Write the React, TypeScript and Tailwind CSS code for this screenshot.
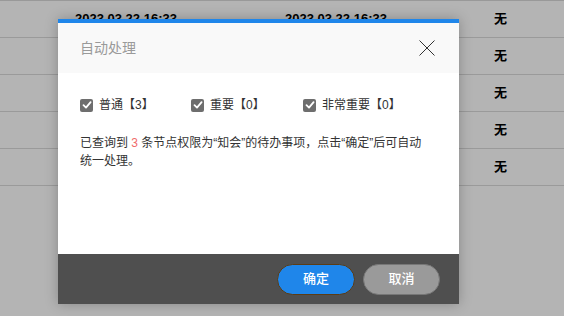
import React from "react";

const rows = [0, 1, 2, 3, 4];

function Check() {
  return (
    <span className="flex h-[13px] w-[13px] items-center justify-center rounded-[2px] bg-[#6e6e6e]">
      <svg width="10" height="10" viewBox="0 0 10 10" fill="none">
        <path d="M1.5 5.2 L4 7.6 L8.6 2.2" stroke="#fff" strokeWidth="1.8" strokeLinecap="round" strokeLinejoin="round" />
      </svg>
    </span>
  );
}

export default function App() {
  return (
    <div
      className="relative h-[316px] w-[564px] overflow-hidden bg-[#b4b4b4]"
      style={{ fontFamily: '"Liberation Sans", "Noto Sans CJK SC", sans-serif' }}
    >
      {/* background table */}
      <div className="border-t border-[#999]">
        {rows.map((r) => (
          <div key={r} className="flex h-[37px] items-center border-b border-[#9a9a9a] text-[13px] font-bold text-black">
            <div className="w-[67px]" />
            <div className="w-[210px] pl-2">2023.03.22 16:33</div>
            <div className="w-[211px] pl-2">2023.03.22 16:33</div>
            <div className="flex-1 pl-[6px]">无</div>
          </div>
        ))}
      </div>

      {/* modal */}
      <div className="absolute left-[58px] top-[19px] flex w-[401px] flex-col shadow-[0_0_12px_rgba(0,0,0,0.25)]">
        <div className="h-[4px] bg-[#1f86ea]" />
        <div className="flex h-[50px] items-center justify-between bg-[#f9f9f9] pl-[22px] pr-[24px]">
          <span className="text-[14px] text-[#9a9a9a]">自动处理</span>
          <svg width="16" height="16" viewBox="0 0 16 16" fill="none">
            <path d="M0.5 0.5 L15.5 15.5 M15.5 0.5 L0.5 15.5" stroke="#333" strokeWidth="1" />
          </svg>
        </div>
        <div className="h-[181px] bg-white pl-[22px] pr-[34px] pt-[23px] text-[12px] text-[#333]">
          <div className="flex items-center">
            <label className="flex w-[111px] items-center gap-[6px]">
              <Check />
              <span>普通【3】</span>
            </label>
            <label className="flex w-[112px] items-center gap-[6px]">
              <Check />
              <span>重要【0】</span>
            </label>
            <label className="flex items-center gap-[6px]">
              <Check />
              <span>非常重要【0】</span>
            </label>
          </div>
          <p className="mt-[20px] leading-[18px]">
            已查询到 <span className="text-[#f06b6b]">3</span> 条节点权限为“知会”的待办事项，点击“确定”后可自动统一处理。
          </p>
        </div>
        <div className="flex h-[50px] items-center justify-end gap-[8px] bg-[#4f4f4f] pr-[19px]">
          <button className="h-[31px] w-[78px] rounded-full border border-[#5c3c14] bg-[#1f86ea] text-[13px] font-medium text-white">
            确定
          </button>
          <button className="h-[31px] w-[77px] rounded-full border border-[#777] bg-[#9a9a9a] text-[13px] font-medium text-white">
            取消
          </button>
        </div>
      </div>
    </div>
  );
}
